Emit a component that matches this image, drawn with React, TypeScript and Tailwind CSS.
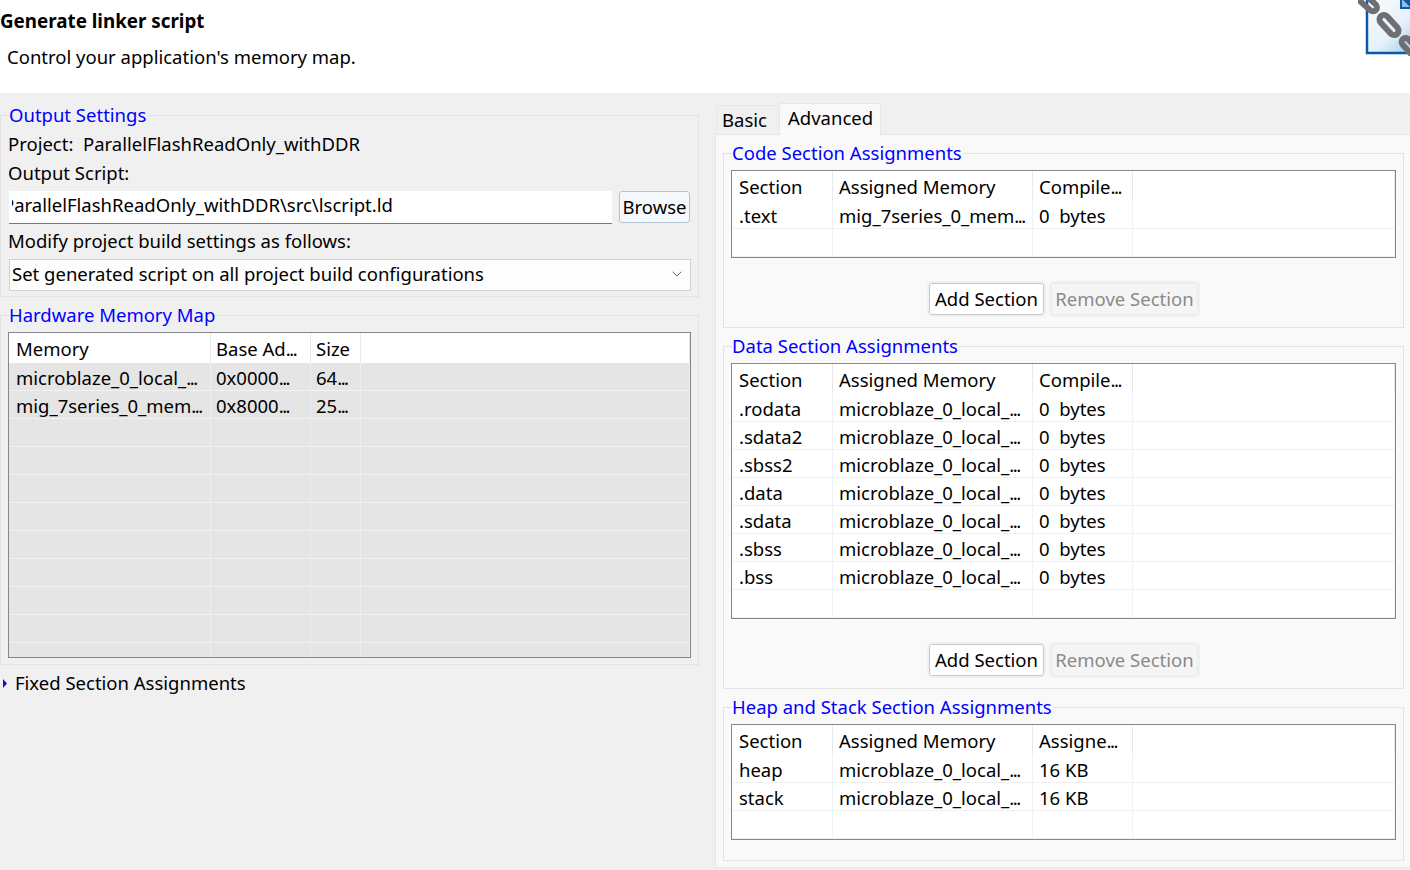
import { ChevronDown } from "lucide-react";

type TableProps = {
  widths: number[];
  header: string[];
  rows: string[][];
  height: number;
  selected?: boolean;
  pad?: number;
};

const memoryRows = [
  ["microblaze_0_local_...", "0x0000...", "64...", ""],
  ["mig_7series_0_mem...", "0x8000...", "25...", ""],
  ["", "", "", ""],
  ["", "", "", ""],
  ["", "", "", ""],
  ["", "", "", ""],
  ["", "", "", ""],
  ["", "", "", ""],
  ["", "", "", ""],
  ["", "", "", ""],
  ["", "", "", ""],
];

const local = "microblaze_0_local_...";
const dataRows = [".rodata", ".sdata2", ".sbss2", ".data", ".sdata", ".sbss", ".bss"].map((s) => [s, local, "0  bytes", ""]);

// the table clips its labels with tighter dots than the font's own
function Label({ text }: { text: string }) {
  if (!text.endsWith("...")) return <>{text}</>;
  return (
    <>
      {text.slice(0, -3)}
      <span className="tracking-[-1.5px]">...</span>
    </>
  );
}

function Table({ widths, header, rows, height, selected, pad = 6 }: TableProps) {
  return (
    <div className="border border-[#86868e] bg-white overflow-hidden flex flex-col" style={{ height }}>
      <div className="flex h-[30px] shrink-0 items-center">
        {header.map((h, i) => (
          <div
            key={i}
            className="h-full flex items-center pt-px border-r border-[#e8e8e8] whitespace-nowrap overflow-hidden"
            style={{ width: widths[i], paddingLeft: i === 0 ? 7 : pad }}
          >
            <span><Label text={h} /></span>
          </div>
        ))}
      </div>
      {rows.map((row, r) => (
        <div
          key={r}
          className={`flex h-[28px] shrink-0 border-b ${selected ? "bg-[#e5e5e5] border-[#f2f2f2]" : "border-[#f0f0f0]"}`}
        >
          {row.map((c, i) => (
            <div
              key={i}
              className={`h-full flex items-center pt-[2px] border-r whitespace-pre overflow-hidden ${selected ? "border-[#eceef4]" : "border-[#eef3fb]"}`}
              style={{ width: widths[i], paddingLeft: i === 0 ? 7 : pad }}
            >
              <span><Label text={c} /></span>
            </div>
          ))}
        </div>
      ))}
    </div>
  );
}

function Group({ title, className, children }: { title: string; className: string; children: React.ReactNode }) {
  return (
    <fieldset className={`border border-[#e2e2e2] ${className}`}>
      <legend className="ml-px pr-px h-6 leading-6 text-[#0000ff]">{title}</legend>
      {children}
    </fieldset>
  );
}

function SectionButtons() {
  return (
    <div className="flex justify-end gap-[7px] mt-[25px] pr-[198px]">
      <button className="h-8 w-[115px] bg-white border border-[#c8c8c8] rounded-[3px] outline-2 outline-[#f0f0f0]">Add Section</button>
      <button className="h-8 w-[147px] bg-[#f5f5f5] border border-[#ececec] rounded-[3px] text-[#8a8a8a] outline-2 outline-[#f0f0f0]">Remove Section</button>
    </div>
  );
}

function LinkerIcon() {
  return (
    <svg className="absolute top-0 left-[1358px]" width="52" height="56" viewBox="0 0 52 56">
      <defs>
        <linearGradient id="doc" x1="0" y1="0" x2="1" y2="1">
          <stop offset="0" stopColor="#ffffff" />
          <stop offset="0.55" stopColor="#e4f0fa" />
          <stop offset="1" stopColor="#8dbde6" />
        </linearGradient>
      </defs>
      <rect x="9" y="-6" width="60" height="59" fill="url(#doc)" stroke="#0a5aa8" strokeWidth="2.5" />
      <path d="M42 -1 L42 9 L53 9 L53 -1 Z" fill="#0a5aa8" />
      <path d="M44 -1 L52 7 L44 7 Z" fill="#8fbde3" />
      <g fill="none" stroke="#6f6f73" strokeWidth="6">
        <rect x="-12" y="-4" width="24" height="8" rx="4" transform="translate(9 2) rotate(42)" />
        <rect x="-12" y="-4.5" width="24" height="9" rx="4.5" transform="translate(31 25) rotate(48)" />
        <rect x="-12" y="-4" width="24" height="8" rx="4" transform="translate(53 48) rotate(48)" />
      </g>
    </svg>
  );
}

export default function App() {
  return (
    <div className="w-[1410px] h-[870px] overflow-hidden flex flex-col bg-[#f0f0f0] text-black text-[18.5px] font-['Noto_Sans','Open_Sans',sans-serif]">
      <div className="relative h-[93px] shrink-0 bg-white pl-[7px]">
        <div className="-ml-[7px] mt-[8px] h-[26px] leading-[26px] text-[18.8px] font-bold">Generate linker script</div>
        <div className="mt-[10px] h-[26px] leading-[26px]">Control your application's memory map.</div>
        <LinkerIcon />
      </div>
      <div className="flex flex-1 min-h-0">
        <div className="w-[699px] shrink-0 pt-[10px]">
          <Group title="Output Settings" className="h-[194px] px-[7px]">
            <div className="h-[29px] leading-[34px] whitespace-pre">Project:  ParallelFlashReadOnly_withDDR</div>
            <div className="h-[28px] leading-[34px]">Output Script:</div>
            <div className="flex gap-[7px] mt-[7px]">
              <div className="w-[603px] ml-px h-[33px] bg-white border-b border-[#7a7a7a] flex items-center pl-[3px] pb-[5px]">
                <div className="flex-1 min-w-0 overflow-hidden">
                  <span className="block -ml-[9px] whitespace-nowrap">ParallelFlashReadOnly_withDDR\src\lscript.ld</span>
                </div>
              </div>
              <button className="w-[71px] h-8 bg-[#f6f9fc] border border-[#b3c3d6] rounded-[3px]">Browse</button>
            </div>
            <div className="h-[35px] leading-[34px]">Modify project build settings as follows:</div>
            <div className="ml-px w-[682px] h-[32px] bg-[#fdfdfd] border border-[#d2d2d2] flex items-center justify-between pl-[2px] pr-[5px] pb-[2px]">
              <span>Set generated script on all project build configurations</span>
              <ChevronDown size={16} strokeWidth={1.3} color="#555" />
            </div>
          </Group>
          <Group title="Hardware Memory Map" className="mt-[6px] h-[362px] px-[7px]">
            <div className="mt-[5px]">
              <Table
                widths={[202, 100, 50, 329]}
                header={["Memory", "Base Ad...", "Size", ""]}
                rows={memoryRows}
                height={326}
                selected
                pad={5}
              />
            </div>
          </Group>
          <div className="flex items-center mt-[5px] h-[26px] pl-[3px] gap-[8px]">
            <svg width="4" height="9" viewBox="0 0 4 9"><path d="M0 0 L4 4.5 L0 9 Z" fill="#1010e0" /></svg>
            <span>Fixed Section Assignments</span>
          </div>
        </div>
        <div className="ml-4 flex-1 min-w-0 flex flex-col">
          <div className="flex items-end h-[41px] shrink-0 pl-px">
            <div className="h-[29px] w-[64px] pl-[5px] leading-[27px] border-t border-r border-l border-[#e6e6e6]">Basic</div>
            <div className="h-[32px] w-[101px] pl-2 leading-[28px] bg-[#f9f9f9] border-t border-r border-[#e6e6e6] relative z-10 -mb-px">Advanced</div>
          </div>
          <div className="flex-1 bg-[#f9f9f9] border-t border-l border-b border-[#e6e6e6] pl-[7px] pt-[6px] mb-[2px]">
            <div className="w-[681px]">
              <Group title="Code Section Assignments" className="pb-[12px] px-[7px]">
                <div className="mt-[5px]">
                  <Table
                    widths={[101, 200, 100, 262]}
                    header={["Section", "Assigned Memory", "Compile...", ""]}
                    rows={[[".text", "mig_7series_0_mem...", "0  bytes", ""], ["", "", "", ""]]}
                    height={88}
                  />
                </div>
                <SectionButtons />
              </Group>
              <Group title="Data Section Assignments" className="mt-[6px] pb-[12px] px-[7px]">
                <div className="mt-[5px]">
                  <Table
                    widths={[101, 200, 100, 262]}
                    header={["Section", "Assigned Memory", "Compile...", ""]}
                    rows={[...dataRows, ["", "", "", ""]]}
                    height={256}
                  />
                </div>
                <SectionButtons />
              </Group>
              <Group title="Heap and Stack Section Assignments" className="mt-[6px] pb-[20px] px-[7px]">
                <div className="mt-[5px]">
                  <Table
                    widths={[101, 200, 100, 262]}
                    header={["Section", "Assigned Memory", "Assigne...", ""]}
                    rows={[["heap", local, "16 KB", ""], ["stack", local, "16 KB", ""], ["", "", "", ""]]}
                    height={116}
                  />
                </div>
              </Group>
            </div>
          </div>
        </div>
      </div>
    </div>
  );
}
